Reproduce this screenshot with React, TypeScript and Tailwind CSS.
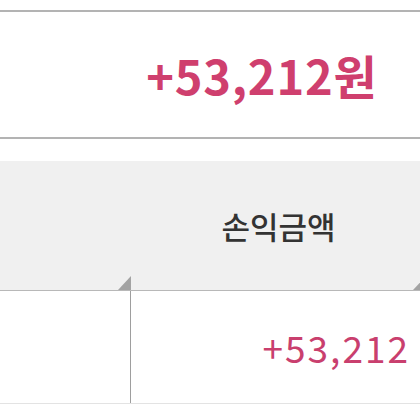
import React from "react";

function Corner() {
  return (
    <svg
      className="absolute right-0 bottom-0"
      width="13"
      height="14"
      viewBox="0 0 13 14"
    >
      <polygon points="13,0 13,14 0,14" fill="#a3a3a3" />
    </svg>
  );
}

export default function App() {
  return (
    <div
      className="w-[420px] h-[420px] overflow-hidden bg-white"
      style={{ fontFamily: '"Noto Sans CJK KR", sans-serif' }}
    >
      <div className="pt-[10px]">
        <div className="h-[129px] border-y-2 border-[#b3b3b3] flex items-center justify-end pr-[44px]">
          <span className="text-[47px] font-bold text-[#cf3f6e] leading-none tracking-[0.8px] -mr-[1.5px]">
            +53,212원
          </span>
        </div>
      </div>
      <div className="mt-[22px] w-[426px]">
        <div className="flex h-[130px] bg-[#f0f0f0] border-b border-[#b8b8b8]">
          <div className="relative w-[131px] shrink-0">
            <Corner />
          </div>
          <div className="relative flex-1 flex items-center justify-center">
            <span className="text-[31px] font-medium text-[#333333] leading-none">
              손익금액
            </span>
            <Corner />
          </div>
        </div>
        <div className="flex h-[113px] border-b border-[#e3e3e3]">
          <div className="w-[131px] shrink-0 border-r border-[#9e9e9e]"></div>
          <div className="flex-1 flex items-center justify-end pr-[18px]">
            <span className="text-[37px] text-[#c93f6e] leading-none tracking-[2px] -mr-[2px]">
              +53,212
            </span>
          </div>
        </div>
      </div>
    </div>
  );
}
